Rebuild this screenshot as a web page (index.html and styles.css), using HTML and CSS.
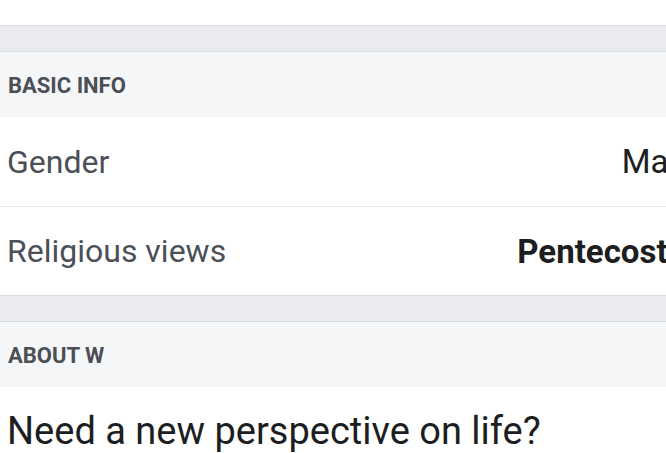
FILE: index.html
```html
<!DOCTYPE html>
<html>
<head>
<meta charset="utf-8">
<link rel="stylesheet" href="styles.css">
</head>
<body>
<div class="page">
  <div class="top"></div>
  <div class="sep"></div>
  <div class="section-head">BASIC INFO</div>
  <div class="row">
    <span class="label">Gender</span>
    <span class="value">Male</span>
  </div>
  <div class="row">
    <span class="label">Religious views</span>
    <span class="value strong">Pentecostal</span>
  </div>
  <div class="sep"></div>
  <div class="section-head">ABOUT W</div>
  <div class="about">Need a new perspective on life?</div>
</div>
</body>
</html>
```

FILE: styles.css
```css
html, body {
  margin: 0;
  padding: 0;
  background: #ffffff;
  overflow: hidden;
}
body {
  font-family: Roboto, "Noto Sans", sans-serif;
}
.page {
  width: 700px;
}
.top {
  height: 25px;
  background: #ffffff;
}
.sep {
  height: 25px;
  background: #e9ebee;
  border-top: 1px solid #dadde1;
  border-bottom: 1px solid #dadde1;
}
.section-head {
  height: 65px;
  background: #f5f6f7;
  display: flex;
  align-items: center;
  padding-left: 8px;
  padding-top: 1px;
  box-sizing: border-box;
  font-size: 22px;
  font-weight: 700;
  color: #4b4f56;
}
.row {
  height: 89px;
  box-sizing: border-box;
  display: flex;
  align-items: center;
  justify-content: space-between;
  padding: 0 6px 0 7px;
}
.row + .row {
  border-top: 1px solid #e4e6eb;
}
.label {
  color: #4b4f56;
  font-size: 32px;
}
.value {
  color: #1c1e21;
  font-size: 33px;
}
.value.strong {
  font-weight: 700;
}
.about {
  padding: 22px 0 0 7px;
  font-size: 38px;
  color: #1c1e21;
  line-height: 45px;
}
```
